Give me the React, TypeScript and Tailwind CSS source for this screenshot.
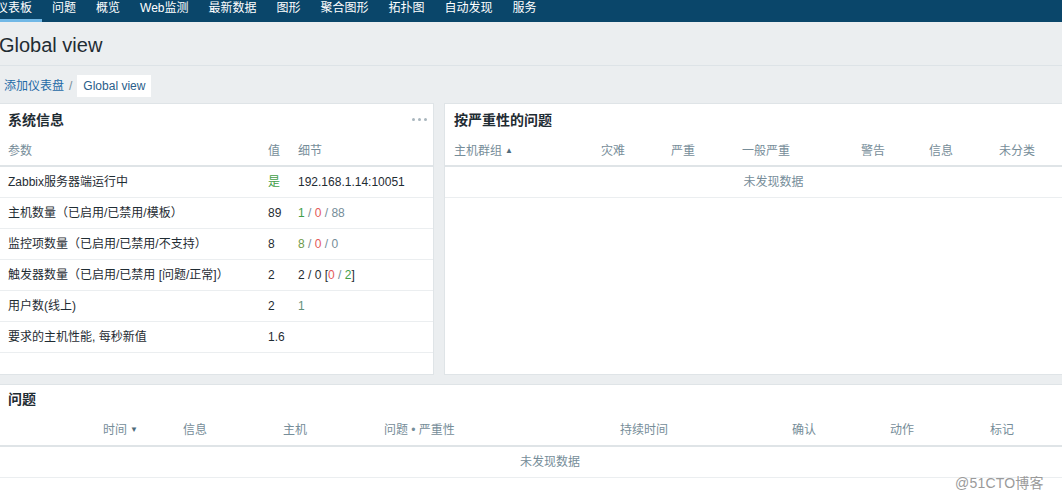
import React from "react";

const navItems = ["仪表板", "问题", "概览", "Web监测", "最新数据", "图形", "聚合图形", "拓扑图", "自动发现", "服务"];

const sysRows: { param: string; value: React.ReactNode; detail: React.ReactNode }[] = [
  {
    param: "Zabbix服务器端运行中",
    value: <span className="text-[#429e47]">是</span>,
    detail: "192.168.1.14:10051",
  },
  {
    param: "主机数量（已启用/已禁用/模板）",
    value: "89",
    detail: (
      <>
        <span className="text-[#429e47]">1</span>
        <span className="text-[#768d99]"> / </span>
        <span className="text-[#e45959]">0</span>
        <span className="text-[#768d99]"> / 88</span>
      </>
    ),
  },
  {
    param: "监控项数量（已启用/已禁用/不支持）",
    value: "8",
    detail: (
      <>
        <span className="text-[#6f9a4a]">8</span>
        <span className="text-[#768d99]"> / </span>
        <span className="text-[#e45959]">0</span>
        <span className="text-[#768d99]"> / 0</span>
      </>
    ),
  },
  {
    param: "触发器数量（已启用/已禁用 [问题/正常]）",
    value: "2",
    detail: (
      <>
        2 / 0 [<span className="text-[#e45959]">0</span>
        <span className="text-[#768d99]"> / </span>
        <span className="text-[#429e47]">2</span>]
      </>
    ),
  },
  {
    param: "用户数(线上)",
    value: "2",
    detail: <span className="text-[#5f8f7a]">1</span>,
  },
  {
    param: "要求的主机性能, 每秒新值",
    value: "1.6",
    detail: "",
  },
];

const sevCols = ["灾难", "严重", "一般严重", "警告", "信息", "未分类"];
const probCols = ["信息", "主机", "问题 • 严重性", "持续时间", "确认", "动作", "标记"];

export default function App() {
  return (
    <div
      className="relative w-[1062px] h-[500px] overflow-hidden bg-[#ebeef0] text-[12px] text-[#1f2c33]"
      style={{ fontFamily: '"Liberation Sans", Arial, "Noto Sans CJK SC", sans-serif' }}
    >
      {/* top nav */}
      <div className="h-[22px] bg-[#0a466a] flex -ml-[14px]">
        {navItems.map((item, i) => (
          <div
            key={item}
            className={
              "h-[22px] px-[10px] pt-[1px] leading-[14px] text-white " +
              (i === 0 ? "border-b-[3px] border-[#71b8e6]" : "text-[#e3edf3]")
            }
          >
            {item}
          </div>
        ))}
      </div>

      {/* header */}
      <div className="h-[44px] pt-[3px] border-b border-[#dde3e7] flex items-center -ml-[1px]">
        <h1 className="text-[20px] leading-[24px] text-[#1f2c33]">Global view</h1>
      </div>

      {/* breadcrumbs */}
      <div className="h-[37px] pt-[9px] flex items-start pl-[4px]">
        <div className="h-[22px] flex items-center">
          <span className="text-[#1f6aa6]">添加仪表盘</span>
          <span className="text-[#768d99] mx-[5px]">/</span>
        </div>
        <span className="bg-white h-[22px] px-[6px] flex items-center text-[#2a5d8a]">Global view</span>
      </div>

      {/* widgets row */}
      <div className="flex gap-[10px] h-[272px]">
        <div className="w-[434px] bg-white border border-[#dfe4e7] border-l-0">
          <div className="h-[32px] pt-[8px] pl-[8px] pr-[6px] flex items-start justify-between">
            <span className="text-[14px] leading-[16px] font-bold text-[#1f2c33]">系统信息</span>
            <div className="flex gap-[3px] pt-[6px]">
              <div className="w-[3px] h-[3px] rounded-full bg-[#a9b6be]" />
              <div className="w-[3px] h-[3px] rounded-full bg-[#a9b6be]" />
              <div className="w-[3px] h-[3px] rounded-full bg-[#a9b6be]" />
            </div>
          </div>
          <div className="h-[31px] flex items-center border-b-2 border-[#dfe4e7] text-[#768d99]">
            <div className="w-[268px] pl-[8px]">参数</div>
            <div className="w-[30px]">值</div>
            <div className="flex-1">细节</div>
          </div>
          {sysRows.map((r) => (
            <div key={r.param} className="h-[31px] flex items-center border-b border-[#ebeef0]">
              <div className="w-[268px] pl-[8px] whitespace-nowrap">{r.param}</div>
              <div className="w-[30px]">{r.value}</div>
              <div className="flex-1 whitespace-pre">{r.detail}</div>
            </div>
          ))}
        </div>

        <div className="flex-1 bg-white border border-[#dfe4e7] border-r-0">
          <div className="h-[32px] pt-[8px] pl-[9px]">
            <span className="text-[14px] leading-[16px] font-bold text-[#1f2c33]">按严重性的问题</span>
          </div>
          <div className="h-[31px] grid grid-cols-[147px_70px_71px_119px_68px_70px_1fr] items-center pl-[9px] border-b-2 border-[#dfe4e7] text-[#768d99]">
            <div className="flex items-center gap-[3px]">
              主机群组<span className="text-[8px] text-[#4f6b7a]">▲</span>
            </div>
            {sevCols.map((c) => (
              <div key={c}>{c}</div>
            ))}
          </div>
          <div className="h-[31px] flex items-center justify-center border-b border-[#ebeef0] text-[#768d99] pl-[40px]">
            未发现数据
          </div>
        </div>
      </div>

      {/* problems widget */}
      <div className="mt-[9px] h-[130px] bg-white border border-[#dfe4e7] border-l-0 border-r-0">
        <div className="h-[30px] pt-[6px] pl-[8px]">
          <span className="text-[14px] leading-[16px] font-bold text-[#1f2c33]">问题</span>
        </div>
        <div className="h-[32px] flex items-center border-b-2 border-[#dfe4e7] text-[#768d99] pl-[103px]">
          <div className="w-[80px] flex items-center gap-[3px]">
            时间<span className="text-[8px] text-[#4f6b7a]">▼</span>
          </div>
          <div className="grid grid-cols-[100px_101px_236px_172px_98px_100px_1fr] flex-1">
            {probCols.map((c) => (
              <div key={c}>{c}</div>
            ))}
          </div>
        </div>
        <div className="h-[31px] flex items-center justify-center border-b border-[#ebeef0] text-[#768d99] pl-[38px]">
          未发现数据
        </div>
      </div>

      {/* watermark */}
      <div className="absolute left-[955px] top-[474px] text-[14px] leading-[18px] text-[#9a9a9a] tracking-[0.2px]">
        @51CTO博客
      </div>
    </div>
  );
}
